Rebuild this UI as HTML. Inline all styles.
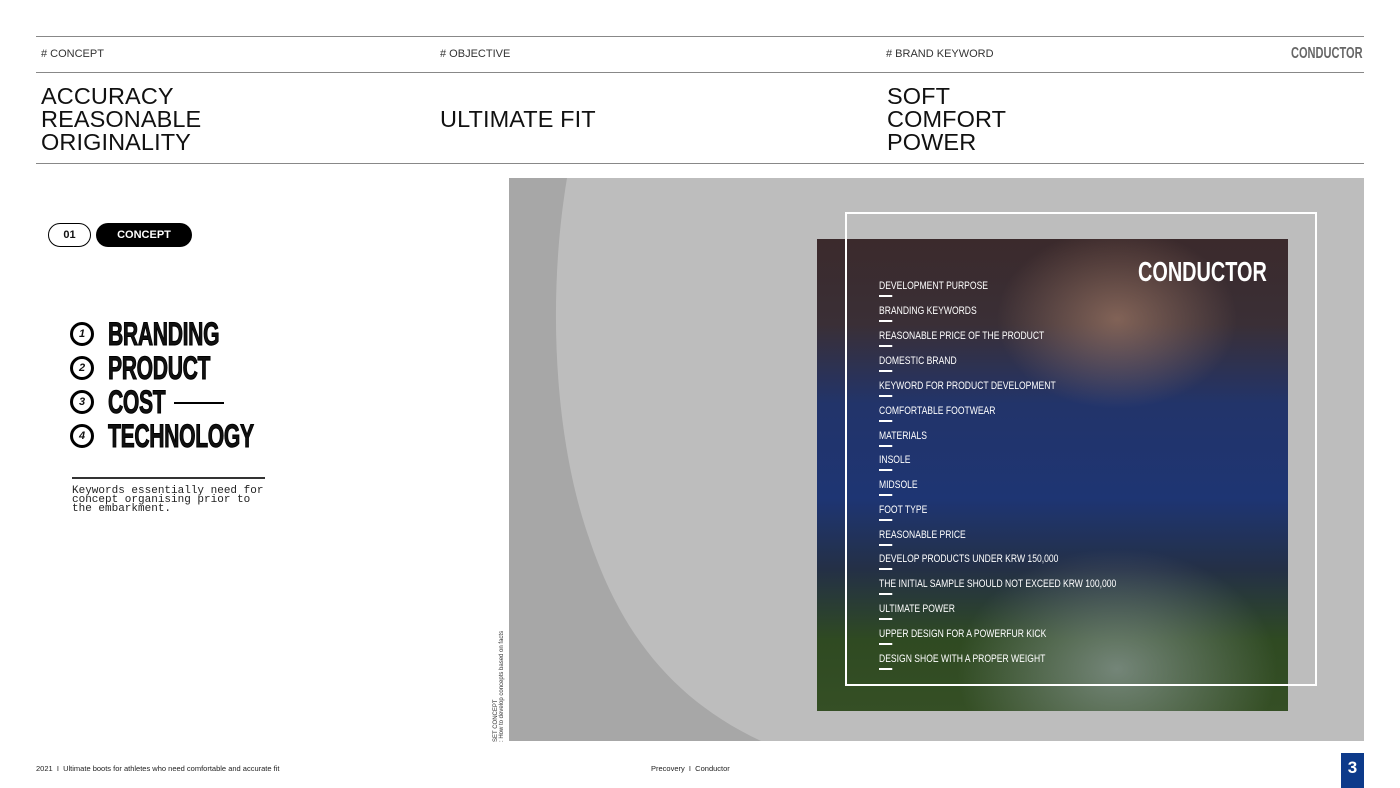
<!DOCTYPE html>
<html><head><meta charset="utf-8"><style>
*{margin:0;padding:0;box-sizing:border-box}
body{width:1400px;height:788px;background:#fff;position:relative;overflow:hidden;font-family:"Liberation Sans",sans-serif;color:#111}
.abs{position:absolute}
.hl{position:absolute;left:36px;width:1328px;height:1px;background:#888}
.lbl{font-size:11px;color:#333;top:48px}
.big{font-size:23.5px;line-height:23px;color:#111;letter-spacing:0.1px}
.cond{font-weight:bold;transform-origin:left top;white-space:nowrap}
.pill{position:absolute;top:223px;height:24px;border-radius:12px;font-size:11px;font-weight:bold;text-align:center;line-height:22px}
.item{position:absolute;left:70px;height:32px}
.circ{position:absolute;left:0;top:5px;width:24px;height:24px;border:3px solid #000;border-radius:50%;font-size:11px;font-style:italic;font-weight:bold;text-align:center;line-height:18px}
.itxt{position:absolute;left:38px;top:0;font-weight:bold;font-size:32px;line-height:34px;letter-spacing:-0.5px;transform:scaleX(0.66);transform-origin:left top;white-space:nowrap;-webkit-text-stroke:1px #000}
.li{position:absolute;left:879px;font-size:11px;color:#fff;transform:scaleX(0.78);transform-origin:left top;white-space:nowrap}
.li:after{content:"";position:absolute;left:0;top:15px;width:17px;height:2px;background:#fff}
</style></head><body>
<div class="hl" style="top:36px"></div>
<div class="hl" style="top:72px"></div>
<div class="hl" style="top:163px"></div>
<div class="abs lbl" style="left:41px"># CONCEPT</div>
<div class="abs lbl" style="left:440px"># OBJECTIVE</div>
<div class="abs lbl" style="left:886px"># BRAND KEYWORD</div>
<div class="abs cond" style="left:1291px;top:45px;font-size:16px;color:#666;transform:scaleX(0.69)">CONDUCTOR</div>
<div class="abs big" style="left:41px;top:85px">ACCURACY<br>REASONABLE<br>ORIGINALITY</div>
<div class="abs big" style="left:440px;top:108px">ULTIMATE FIT</div>
<div class="abs big" style="left:887px;top:85px">SOFT<br>COMFORT<br>POWER</div>

<div class="pill" style="left:48px;width:43px;border:1.5px solid #000">01</div>
<div class="pill" style="left:96px;width:96px;background:#000;color:#fff;line-height:24px">CONCEPT</div>

<div class="item" style="top:317px"><div class="circ">1</div><div class="itxt">BRANDING</div></div>
<div class="item" style="top:351px"><div class="circ">2</div><div class="itxt">PRODUCT</div></div>
<div class="item" style="top:385px"><div class="circ">3</div><div class="itxt">COST</div><div class="abs" style="left:104px;top:17px;width:50px;height:2px;background:#000"></div></div>
<div class="item" style="top:419px"><div class="circ">4</div><div class="itxt">TECHNOLOGY</div></div>
<div class="abs" style="left:72px;top:477px;width:193px;height:2px;background:#333"></div>
<div class="abs" style="left:72px;top:487px;font-family:'Liberation Mono',monospace;font-size:11px;line-height:9px;color:#222">Keywords essentially need for<br>concept organising prior to<br>the embarkment.</div>

<svg class="abs" style="left:509px;top:178px" width="855" height="563">
<rect width="855" height="563" fill="#a7a7a7"/>
<path d="M58 0 C38 120 45 260 80 360 C110 450 160 520 252 563 L855 563 L855 0 Z" fill="#bdbdbd"/>
</svg>
<div class="abs" style="left:493px;top:742px;transform:rotate(-90deg);transform-origin:left top;font-size:6px;line-height:6px;color:#333;white-space:nowrap">SET CONCEPT<br>: How to develop concepts based on facts</div>

<div class="abs" style="left:817px;top:239px;width:471px;height:472px;background:
radial-gradient(ellipse 120px 90px at 300px 80px,rgba(200,150,120,.5),transparent),
radial-gradient(ellipse 160px 120px at 300px 430px,rgba(170,180,190,.55),transparent),
linear-gradient(180deg,#3b2a2c 0%,#3a2f36 18%,#22346a 35%,#1e3573 55%,#243046 70%,#2f4a22 85%,#354f25 100%)"></div>
<div class="abs" style="left:845px;top:212px;width:472px;height:474px;border:2px solid #fff"></div>
<div class="abs cond" style="left:1138px;top:256px;font-size:28px;color:#fff;transform:scaleX(0.71)">CONDUCTOR</div>

<div class="li" style="top:280px">DEVELOPMENT PURPOSE</div>
<div class="li" style="top:305px">BRANDING KEYWORDS</div>
<div class="li" style="top:330px">REASONABLE PRICE OF THE PRODUCT</div>
<div class="li" style="top:355px">DOMESTIC BRAND</div>
<div class="li" style="top:380px">KEYWORD FOR PRODUCT DEVELOPMENT</div>
<div class="li" style="top:405px">COMFORTABLE FOOTWEAR</div>
<div class="li" style="top:430px">MATERIALS</div>
<div class="li" style="top:454px">INSOLE</div>
<div class="li" style="top:479px">MIDSOLE</div>
<div class="li" style="top:504px">FOOT TYPE</div>
<div class="li" style="top:529px">REASONABLE PRICE</div>
<div class="li" style="top:553px">DEVELOP PRODUCTS UNDER KRW 150,000</div>
<div class="li" style="top:578px">THE INITIAL SAMPLE SHOULD NOT EXCEED KRW 100,000</div>
<div class="li" style="top:603px">ULTIMATE POWER</div>
<div class="li" style="top:628px">UPPER DESIGN FOR A POWERFUR KICK</div>
<div class="li" style="top:653px">DESIGN SHOE WITH A PROPER WEIGHT</div>

<div class="abs" style="left:36px;top:764px;font-size:7.5px;color:#222">2021 &nbsp;I&nbsp; Ultimate boots for athletes who need comfortable and accurate fit</div>
<div class="abs" style="left:651px;top:764px;font-size:7.5px;color:#222">Precovery &nbsp;I&nbsp; Conductor</div>
<div class="abs" style="left:1341px;top:753px;width:23px;height:35px;background:#0d3a8a;color:#fff;font-size:17px;font-weight:bold;text-align:center;line-height:30px">3</div>
</body></html>
